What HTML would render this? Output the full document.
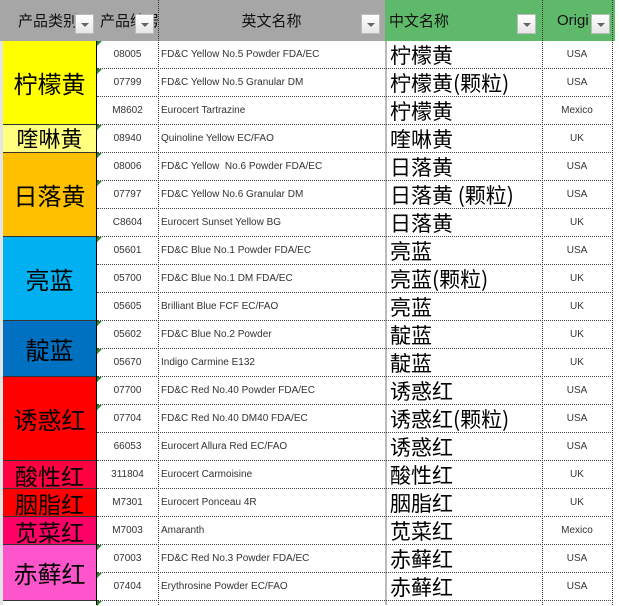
<!DOCTYPE html>
<html><head><meta charset="utf-8"><style>
*{margin:0;padding:0;box-sizing:border-box}
body{width:619px;height:605px;overflow:hidden;background:#fff;position:relative;font-family:"Liberation Sans","Noto Sans CJK SC",sans-serif}
.a{position:absolute}
.h{position:absolute;top:0;height:41px;background:#a6a6a6;color:#111;font-size:15px;line-height:41px;font-family:"Noto Sans CJK SC",sans-serif}
.dd{position:absolute;top:14px;width:19px;height:20px;background:linear-gradient(#fff,#e6e6e6);border:1px solid #bbb}
.dd:after{content:"";position:absolute;left:5px;top:8px;border-left:4px solid transparent;border-right:4px solid transparent;border-top:4px solid #666}
.r{position:absolute;left:97px;width:516px;height:28px;border-bottom:1px dotted #444}
.c{position:absolute;top:0;height:28px;line-height:28px;font-size:10px;color:#333;white-space:nowrap}
.b{left:0;width:61px;text-align:center}
.e{left:64px}
.d{left:293px;font-size:21px;color:#000;font-family:"Noto Sans CJK SC",sans-serif;line-height:28px}
.o{left:445px;width:70px;text-align:center}
.g{position:absolute;left:3px;width:93px;border-bottom:1px solid #333;text-align:center;font-family:"Noto Sans CJK SC",sans-serif;color:#000}
.tri{position:absolute;left:97px;width:0;height:0;border-top:5px solid #2a8a2a;border-right:5px solid transparent}
</style></head><body>
<div class="h" style="left:0;width:97px;padding-left:18px;overflow:hidden;white-space:nowrap">产品类别</div>
<div class="dd" style="left:75px"></div>
<div class="h" style="left:97px;width:61px;padding-left:3px;overflow:hidden;white-space:nowrap">产品编号</div>
<div class="dd" style="left:135px"></div>
<div class="h" style="left:158px;width:227px;text-align:center">英文名称</div>
<div class="dd" style="left:361px"></div>
<div class="h" style="left:385px;width:157px;background:#5fb96a;padding-left:4px">中文名称</div>
<div class="dd" style="left:517px"></div>
<div class="h" style="left:542px;width:73px;background:#5fb96a;padding-left:15px;font-family:'Liberation Sans',sans-serif;font-size:15px">Origi</div>
<div class="dd" style="left:591px"></div>
<div class="a" style="left:0;top:41px;width:3px;height:564px;background:#e4e4e4"></div>
<div class="a" style="left:96px;top:41px;width:1px;height:564px;background:#000"></div>
<div class="a" style="left:158px;top:0;height:605px;border-left:1px dotted #333"></div>
<div class="a" style="left:385px;top:41px;width:2px;height:564px;background:#bbb"></div>
<div class="a" style="left:542px;top:0;height:605px;border-left:1px dotted #333"></div>
<div class="a" style="left:612px;top:0;height:605px;border-left:1px dotted #333"></div>

<div class="g" style="top:41px;height:84px;line-height:84px;background:#ffff00;font-size:24px">柠檬黄</div>
<div class="g" style="top:125px;height:28px;line-height:26px;background:#ffff80;font-size:22px">喹啉黄</div>
<div class="g" style="top:153px;height:84px;line-height:84px;background:#ffc000;font-size:24px">日落黄</div>
<div class="g" style="top:237px;height:84px;line-height:84px;background:#00b0f0;font-size:24px">亮蓝</div>
<div class="g" style="top:321px;height:56px;line-height:56px;background:#0070c0;font-size:24px">靛蓝</div>
<div class="g" style="top:377px;height:84px;line-height:84px;background:#ff0000;font-size:24px">诱惑红</div>
<div class="g" style="top:461px;height:28px;line-height:28px;background:#ff0040;font-size:23px">酸性红</div>
<div class="g" style="top:489px;height:28px;line-height:28px;background:#ff0000;font-size:23px">胭脂红</div>
<div class="g" style="top:517px;height:28px;line-height:28px;background:#ff0066;font-size:23px">苋菜红</div>
<div class="g" style="top:545px;height:56px;line-height:56px;background:#ff55cc;font-size:24px">赤藓红</div>

<div class="r" style="top:41px"><div class="c b">08005</div><div class="c e">FD&amp;C Yellow No.5 Powder FDA/EC</div><div class="c d">柠檬黄</div><div class="c o">USA</div></div>
<div class="r" style="top:69px"><div class="c b">07799</div><div class="c e">FD&amp;C Yellow No.5 Granular DM</div><div class="c d">柠檬黄(颗粒)</div><div class="c o">USA</div></div>
<div class="r" style="top:97px"><div class="c b">M8602</div><div class="c e">Eurocert Tartrazine</div><div class="c d">柠檬黄</div><div class="c o">Mexico</div></div>
<div class="r" style="top:125px"><div class="c b">08940</div><div class="c e">Quinoline Yellow EC/FAO</div><div class="c d">喹啉黄</div><div class="c o">UK</div></div>
<div class="r" style="top:153px"><div class="c b">08006</div><div class="c e">FD&amp;C Yellow &nbsp;No.6 Powder FDA/EC</div><div class="c d">日落黄</div><div class="c o">USA</div></div>
<div class="r" style="top:181px"><div class="c b">07797</div><div class="c e">FD&amp;C Yellow No.6 Granular DM</div><div class="c d">日落黄 (颗粒)</div><div class="c o">USA</div></div>
<div class="r" style="top:209px"><div class="c b">C8604</div><div class="c e">Eurocert Sunset Yellow BG</div><div class="c d">日落黄</div><div class="c o">UK</div></div>
<div class="r" style="top:237px"><div class="c b">05601</div><div class="c e">FD&amp;C Blue No.1 Powder FDA/EC</div><div class="c d">亮蓝</div><div class="c o">USA</div></div>
<div class="r" style="top:265px"><div class="c b">05700</div><div class="c e">FD&amp;C Blue No.1 DM FDA/EC</div><div class="c d">亮蓝(颗粒)</div><div class="c o">UK</div></div>
<div class="r" style="top:293px"><div class="c b">05605</div><div class="c e">Brilliant Blue FCF EC/FAO</div><div class="c d">亮蓝</div><div class="c o">UK</div></div>
<div class="r" style="top:321px"><div class="c b">05602</div><div class="c e">FD&amp;C Blue No.2 Powder</div><div class="c d">靛蓝</div><div class="c o">UK</div></div>
<div class="r" style="top:349px"><div class="c b">05670</div><div class="c e">Indigo Carmine E132</div><div class="c d">靛蓝</div><div class="c o">UK</div></div>
<div class="r" style="top:377px"><div class="c b">07700</div><div class="c e">FD&amp;C Red No.40 Powder FDA/EC</div><div class="c d">诱惑红</div><div class="c o">USA</div></div>
<div class="r" style="top:405px"><div class="c b">07704</div><div class="c e">FD&amp;C Red No.40 DM40 FDA/EC</div><div class="c d">诱惑红(颗粒)</div><div class="c o">USA</div></div>
<div class="r" style="top:433px"><div class="c b">66053</div><div class="c e">Eurocert Allura Red EC/FAO</div><div class="c d">诱惑红</div><div class="c o">USA</div></div>
<div class="r" style="top:461px"><div class="c b">311804</div><div class="c e">Eurocert Carmoisine</div><div class="c d">酸性红</div><div class="c o">UK</div></div>
<div class="r" style="top:489px"><div class="c b">M7301</div><div class="c e">Eurocert Ponceau 4R</div><div class="c d">胭脂红</div><div class="c o">UK</div></div>
<div class="r" style="top:517px"><div class="c b">M7003</div><div class="c e">Amaranth</div><div class="c d">苋菜红</div><div class="c o">Mexico</div></div>
<div class="r" style="top:545px"><div class="c b">07003</div><div class="c e">FD&amp;C Red No.3 Powder FDA/EC</div><div class="c d">赤藓红</div><div class="c o">USA</div></div>
<div class="r" style="top:573px"><div class="c b">07404</div><div class="c e">Erythrosine Powder EC/FAO</div><div class="c d">赤藓红</div><div class="c o">USA</div></div>
<div class="a" style="left:3px;top:601px;width:93px;height:4px;background:#fff"></div>

<div class="tri" style="top:41px"></div><div class="tri" style="top:69px"></div><div class="tri" style="top:125px"></div><div class="tri" style="top:153px"></div><div class="tri" style="top:181px"></div><div class="tri" style="top:237px"></div><div class="tri" style="top:321px"></div><div class="tri" style="top:349px"></div><div class="tri" style="top:377px"></div><div class="tri" style="top:405px"></div><div class="tri" style="top:545px"></div><div class="tri" style="top:573px"></div><div class="tri" style="top:601px"></div>
</body></html>
